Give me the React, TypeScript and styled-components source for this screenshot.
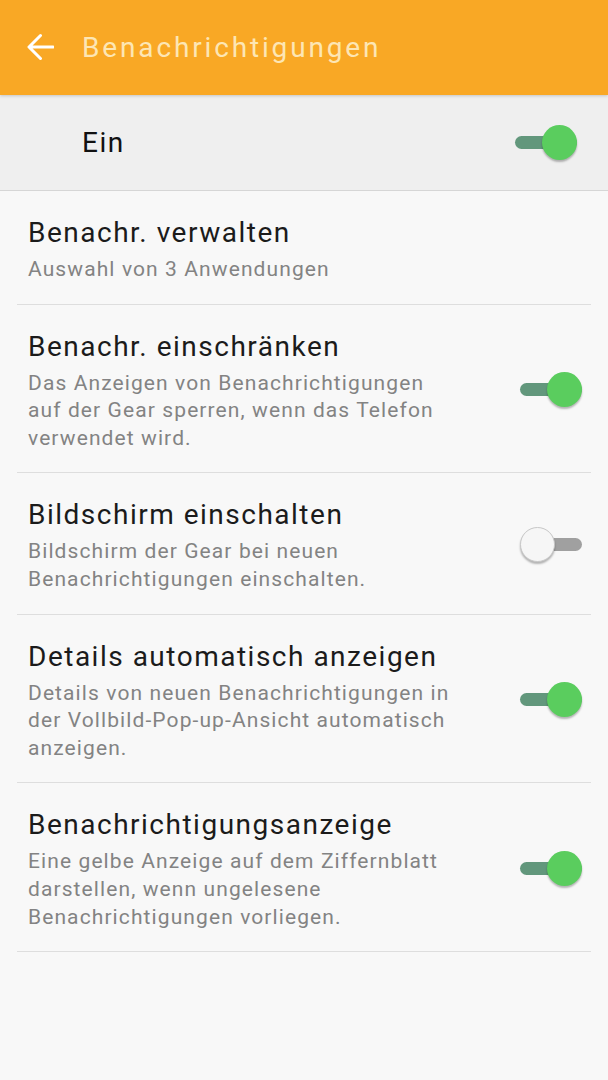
import React from "react";
import styled, { createGlobalStyle } from "styled-components";

const GlobalStyle = createGlobalStyle`
  html, body { margin: 0; padding: 0; background: #f8f8f8; }
  body { font-family: Roboto, "Noto Sans", sans-serif; -webkit-font-smoothing: antialiased; }
  * { box-sizing: border-box; }
`;

const Screen = styled.div`
  width: 608px;
  height: 1080px;
  background: #f8f8f8;
  display: flex;
  flex-direction: column;
  overflow: hidden;
`;

const AppBar = styled.header`
  height: 95px;
  background: #f9a825;
  display: flex;
  align-items: center;
  padding-left: 27px;
  gap: 28px;
  position: relative;
  z-index: 2;
  box-shadow: 0 1px 3px rgba(0, 0, 0, 0.18);
`;

const BackButton = styled.button`
  width: 27px;
  height: 28px;
  padding: 0;
  border: 0;
  background: none;
  display: flex;
  margin-top: -2px;
`;

const Title = styled.h1`
  margin: 0;
  font-size: 28px;
  font-weight: 400;
  color: #fde6b4;
  letter-spacing: 2.85px;
`;

const MasterBar = styled.div`
  height: 96px;
  background: #efefef;
  border-bottom: 1px solid #d6d6d6;
  display: flex;
  align-items: center;
  justify-content: space-between;
  padding: 0 31px 0 82px;
`;

const MasterLabel = styled.span`
  font-size: 28px;
  letter-spacing: 1.5px;
  color: #111;
`;

const List = styled.div`
  padding: 0 17px;
`;

const Row = styled.div`
  display: flex;
  align-items: center;
  padding: 22px 9px 20px 11px;
  border-bottom: 1px solid #dedede;
`;

const TextBlock = styled.div`
  flex: 1;
  display: flex;
  flex-direction: column;
`;

const RowTitle = styled.div`
  font-size: 28px;
  line-height: 40px;
  letter-spacing: 1.5px;
  color: #1b1b1b;
`;

const RowSub = styled.div`
  margin-top: 3px;
  font-size: 21px;
  line-height: 27.6px;
  color: #838383;
  max-width: 428px;
  letter-spacing: 1.1px;
`;

const SwitchTrack = styled.div<{ $on: boolean }>`
  position: relative;
  width: 62px;
  height: 35px;
  flex-shrink: 0;
  &::before {
    content: "";
    position: absolute;
    left: ${(p) => (p.$on ? "0" : "10px")};
    right: 0;
    top: 11px;
    height: 13px;
    border-radius: 7px;
    background: ${(p) => (p.$on ? "#62977c" : "#a0a0a0")};
  }
`;

const Thumb = styled.div<{ $on: boolean }>`
  position: absolute;
  top: 0;
  ${(p) => (p.$on ? "right: 0;" : "left: 0;")}
  width: 35px;
  height: 35px;
  border-radius: 50%;
  background: ${(p) => (p.$on ? "#5acd5e" : "#f6f6f6")};
  border: ${(p) => (p.$on ? "none" : "1px solid #c8c8c8")};
  box-shadow: 0 2px 2px rgba(0, 0, 0, 0.28);
`;

const Switch = ({ on }: { on: boolean }) => (
  <SwitchTrack $on={on}>
    <Thumb $on={on} />
  </SwitchTrack>
);

const BackArrow = () => (
  <svg width="27" height="28" viewBox="0 0 27 28" fill="none">
    <path
      d="M26 14H2.5M13.5 2.5L2 14l11.5 11.5"
      stroke="#fff"
      strokeWidth="3"
      strokeLinecap="round"
      strokeLinejoin="round"
    />
  </svg>
);

type Item = { title: string; sub: string; toggle?: boolean };

const items: Item[] = [
  { title: "Benachr. verwalten", sub: "Auswahl von 3 Anwendungen" },
  {
    title: "Benachr. einschränken",
    sub: "Das Anzeigen von Benachrichtigungen auf der Gear sperren, wenn das Telefon verwendet wird.",
    toggle: true,
  },
  {
    title: "Bildschirm einschalten",
    sub: "Bildschirm der Gear bei neuen Benachrichtigungen einschalten.",
    toggle: false,
  },
  {
    title: "Details automatisch anzeigen",
    sub: "Details von neuen Benachrichtigungen in der Vollbild-Pop-up-Ansicht automatisch anzeigen.",
    toggle: true,
  },
  {
    title: "Benachrichtigungsanzeige",
    sub: "Eine gelbe Anzeige auf dem Ziffernblatt darstellen, wenn ungelesene Benachrichtigungen vorliegen.",
    toggle: true,
  },
];

export default function App() {
  return (
    <Screen>
      <GlobalStyle />
      <AppBar>
        <BackButton aria-label="Zurück">
          <BackArrow />
        </BackButton>
        <Title>Benachrichtigungen</Title>
      </AppBar>
      <MasterBar>
        <MasterLabel>Ein</MasterLabel>
        <Switch on />
      </MasterBar>
      <List>
        {items.map((it) => (
          <Row key={it.title}>
            <TextBlock>
              <RowTitle>{it.title}</RowTitle>
              <RowSub>{it.sub}</RowSub>
            </TextBlock>
            {it.toggle !== undefined && <Switch on={it.toggle} />}
          </Row>
        ))}
      </List>
    </Screen>
  );
}
